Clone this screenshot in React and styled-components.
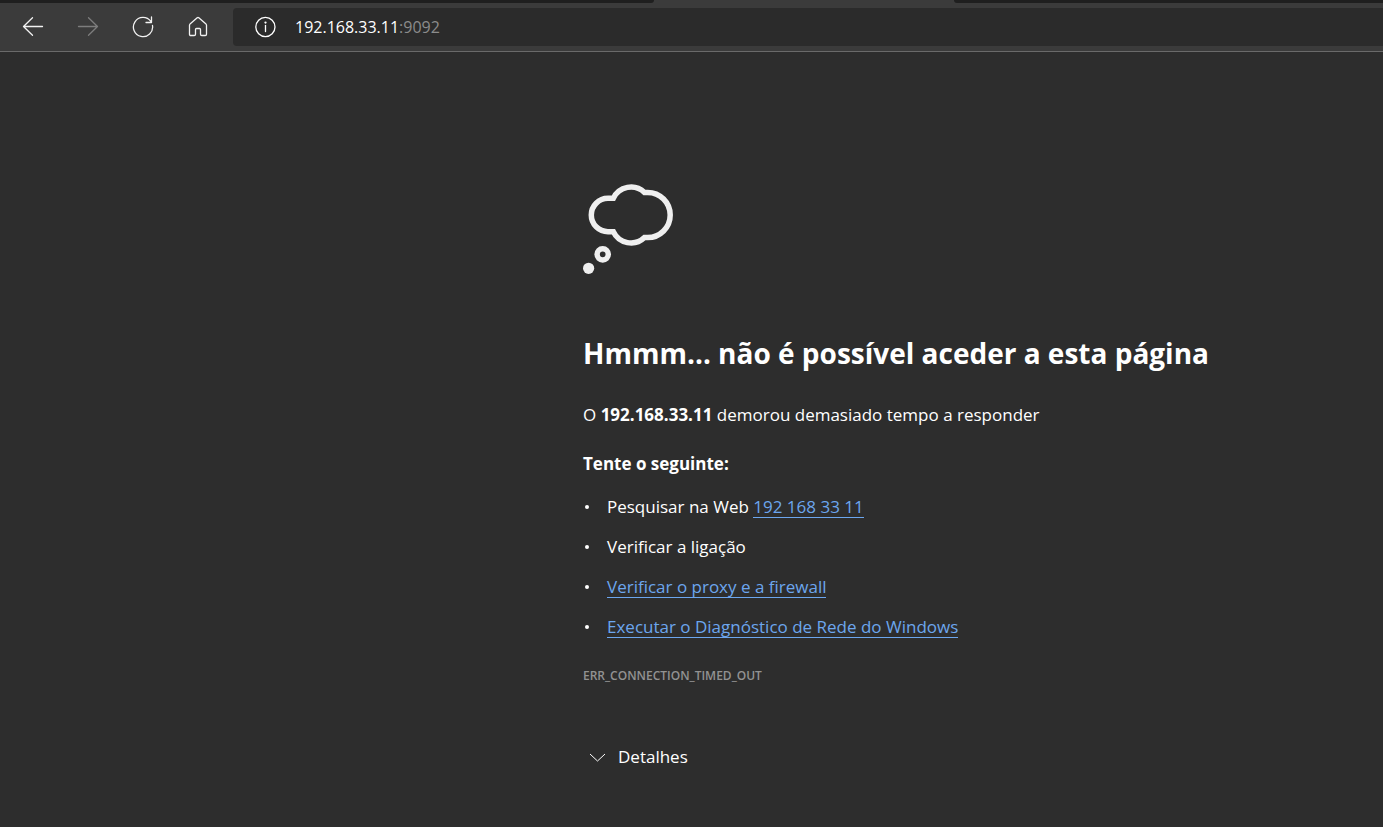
import React, { useState } from "react";
import styled, { createGlobalStyle } from "styled-components";

const GlobalStyle = createGlobalStyle`
  *, *::before, *::after { box-sizing: border-box; }
  body {
    margin: 0;
    background: #2d2d2d;
    color: #ffffff;
    font-family: "Segoe UI", "Open Sans", "Noto Sans", sans-serif;
    font-size: 17px;
    line-height: 24px;
  }
`;

const Page = styled.div`
  display: flex;
  flex-direction: column;
  min-height: 100vh;
`;

const TabStrip = styled.div`
  display: grid;
  grid-template-columns: 654fr 300fr 429fr;
  height: 3px;
  background: #3b3b3b;
`;

const TabEdge = styled.div`
  grid-column: ${(p) => p.$column};
  background: #1f1f1f;
  border-radius: ${(p) => (p.$column === 1 ? "0 0 4px 0" : "0 0 0 4px")};
`;

const Toolbar = styled.header`
  display: flex;
  align-items: center;
  height: 49px;
  padding-left: 17px;
  background: #3b3b3b;
  border-bottom: 1px solid #6a6a6a;
`;

const NavButtons = styled.nav`
  display: flex;
  gap: 23px;
  margin-right: 19px;
`;

const NavButton = styled.button`
  display: flex;
  align-items: center;
  justify-content: center;
  width: 32px;
  height: 32px;
  padding: 0;
  border: 0;
  background: none;
  color: ${(p) => (p.disabled ? "#7d7d7d" : "#f2f2f2")};
`;

const AddressBar = styled.div`
  display: flex;
  flex: 1;
  align-items: center;
  height: 38px;
  padding-left: 16px;
  gap: 14px;
  border-radius: 4px 0 0 4px;
  background: #2b2b2b;
`;

const Address = styled.span`
  color: #ffffff;
  font-size: 16px;
`;

const Port = styled.span`
  color: #8c8c8c;
`;

const Content = styled.main`
  display: grid;
  grid-template-columns: 583fr 800fr;
  padding: 132px 0 56px;
`;

const ErrorPanel = styled.section`
  grid-column: 2;
  min-width: 0;
`;

const ThoughtBubble = styled.svg`
  display: block;
`;

const Title = styled.h1`
  margin: 59px 0 0;
  font-size: 28px;
  line-height: 40px;
  font-weight: 700;
`;

const Summary = styled.p`
  margin: 30px 0 0;
`;

const Subtitle = styled.h2`
  margin: 25px 0 0;
  font-size: 17px;
  line-height: 24px;
  font-weight: 700;
`;

const Suggestions = styled.ul`
  display: flex;
  flex-direction: column;
  gap: 16px;
  margin: 19px 0 0;
  padding: 0;
  list-style: none;
`;

const Suggestion = styled.li`
  display: flex;
  align-items: center;

  &::before {
    content: "";
    width: 4px;
    height: 4px;
    margin: 0 18px 0 2px;
    border-radius: 50%;
    background: #ffffff;
  }
`;

const Link = styled.a`
  display: inline-block;
  color: #6ca6ee;
  line-height: 20px;
  text-decoration: none;
  border-bottom: 1px solid #6ca6ee;
`;

const ErrorCode = styled.p`
  margin: 29px 0 0;
  color: #929292;
  font-size: 12px;
  line-height: 16px;
  font-weight: 600;
`;

const DetailsButton = styled.button`
  display: flex;
  align-items: center;
  gap: 12px;
  margin-top: 61px;
  padding: 0 6px;
  border: 0;
  background: none;
  color: #ffffff;
  font: inherit;
`;

function Icon({ size = 22, children }) {
  return (
    <svg
      width={size}
      height={size}
      viewBox={`0 0 ${size} ${size}`}
      fill="none"
      stroke="currentColor"
      strokeWidth="1.3"
      strokeLinecap="round"
      strokeLinejoin="round"
      aria-hidden="true"
    >
      {children}
    </svg>
  );
}

export default function App() {
  const [open, setOpen] = useState(false);

  return (
    <Page>
      <GlobalStyle />
      <TabStrip>
        <TabEdge $column={1} />
        <TabEdge $column={3} />
      </TabStrip>
      <Toolbar>
        <NavButtons>
          <NavButton aria-label="Voltar">
            <Icon>
              <path d="M20.5 10.5H1.5M10.5 1.8L1.5 10.5L10.5 19.2" />
            </Icon>
          </NavButton>
          <NavButton aria-label="Avançar" disabled>
            <Icon>
              <path d="M1.5 10.5H20.5M11.5 1.8L20.5 10.5L11.5 19.2" />
            </Icon>
          </NavButton>
          <NavButton aria-label="Atualizar">
            <Icon>
              <path d="M20.5 9.5A9.6 9.6 0 1 1 18.8 5.4M19.5 1V6.5H14" />
            </Icon>
          </NavButton>
          <NavButton aria-label="Página inicial">
            <Icon>
              <path d="M2.5 9.2Q2.5 8.6 3 8.1L10.2 1.8Q11 1.1 11.8 1.8L19 8.1Q19.5 8.6 19.5 9.2V18.2Q19.5 19.5 18.2 19.5H14.8Q13.5 19.5 13.5 18.2V13.5Q13.5 12.5 12.5 12.5H9.5Q8.5 12.5 8.5 13.5V18.2Q8.5 19.5 7.2 19.5H3.8Q2.5 19.5 2.5 18.2Z" />
            </Icon>
          </NavButton>
        </NavButtons>
        <AddressBar>
          <Icon size={32}>
            <circle cx="16.4" cy="16" r="9.6" />
            <path d="M16.5 14.5V20.5" />
            <circle cx="16.5" cy="11.6" r="0.5" fill="currentColor" />
          </Icon>
          <Address>
            192.168.33.11<Port>:9092</Port>
          </Address>
        </AddressBar>
      </Toolbar>
      <Content>
        <ErrorPanel>
          <ThoughtBubble
            width="90"
            height="90"
            viewBox="0 0 90 90"
            fill="none"
            stroke="#efefef"
            strokeWidth="5.5"
            aria-hidden="true"
          >
            <path d="M30.3 14.3A19.6 19.6 0 0 1 61.5 8.4H64.6A22.6 22.6 0 0 1 64.6 53.6H61.5A19.6 19.6 0 0 1 30.3 47.7H25A16.7 16.7 0 0 1 25 14.3Z" />
            <circle cx="19.7" cy="70.3" r="5.6" />
            <circle cx="5.6" cy="84.3" r="5.6" fill="#efefef" stroke="none" />
          </ThoughtBubble>
          <Title>Hmmm… não é possível aceder a esta página</Title>
          <Summary>
            O <b>192.168.33.11</b> demorou demasiado tempo a responder
          </Summary>
          <Subtitle>Tente o seguinte:</Subtitle>
          <Suggestions>
            <Suggestion>
              <span>
                Pesquisar na Web <Link href="#pesquisar">192 168 33 11</Link>
              </span>
            </Suggestion>
            <Suggestion>
              <span>Verificar a ligação</span>
            </Suggestion>
            <Suggestion>
              <span>
                <Link href="#proxy">Verificar o proxy e a firewall</Link>
              </span>
            </Suggestion>
            <Suggestion>
              <span>
                <Link href="#diagnostico">
                  Executar o Diagnóstico de Rede do Windows
                </Link>
              </span>
            </Suggestion>
          </Suggestions>
          <ErrorCode>ERR_CONNECTION_TIMED_OUT</ErrorCode>
          <DetailsButton aria-expanded={open} onClick={() => setOpen(!open)}>
            <svg
              width="17"
              height="17"
              viewBox="0 0 17 17"
              fill="none"
              stroke="currentColor"
              strokeWidth="1"
              aria-hidden="true"
            >
              <path d="M1 5L8.5 12L16 5" />
            </svg>
            Detalhes
          </DetailsButton>
        </ErrorPanel>
      </Content>
    </Page>
  );
}
